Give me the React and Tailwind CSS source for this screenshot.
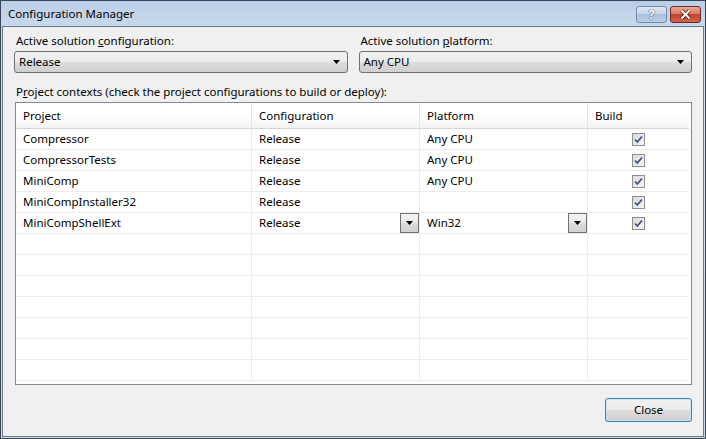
import React from "react"

const rows = [
    { project: "Compressor", config: "Release", platform: "Any CPU" },
    { project: "CompressorTests", config: "Release", platform: "Any CPU" },
    { project: "MiniComp", config: "Release", platform: "Any CPU" },
    { project: "MiniCompInstaller32", config: "Release", platform: "" },
    { project: "MiniCompShellExt", config: "Release", platform: "Win32", combo: true },
]

function Arrow() {
    return <svg width="7" height="4" viewBox="0 0 7 4"><path d="M0 0h7L3.5 4z" fill="#000" /></svg>
}

function Combo({ value }) {
    return <div className="flex h-[22px] items-center justify-between rounded-[3px] border border-[#707070] bg-[linear-gradient(#f2f2f2_0%,#ebebeb_50%,#dddddd_50%,#cfcfcf_100%)] pl-[4px] pr-[7px]">
        <span>{value}</span>
        <Arrow />
    </div>
}

function CellButton() {
    return <div className="flex h-[20px] w-[19px] items-center justify-center border border-[#707070] bg-[linear-gradient(#f4f4f4_0%,#e8e8e8_50%,#dcdcdc_50%,#d2d2d2_100%)]">
        <Arrow />
    </div>
}

function Check() {
    return <div className="flex h-[13px] w-[13px] items-center justify-center border border-[#8e8f8f] bg-[linear-gradient(135deg,#dadada,#f6f6f6)]">
        <svg width="11" height="11" viewBox="0 0 11 11">
            <path d="M2 5.5L4.3 8L9 2.5" stroke="#3d4f85" strokeWidth="1.7" fill="none" />
        </svg>
    </div>
}

export default function App() {
    const empty = Array.from({ length: 7 })
    return <div className="h-[439px] w-[706px] overflow-hidden bg-[#f0f0f0] font-['Noto_Sans','Liberation_Sans',sans-serif] text-[11.5px] text-black">
        <div className="flex h-[439px] w-[706px] flex-col border border-[#3a4656] bg-[linear-gradient(#b9cee7,#d3e0ef_40px,#cddcec)]">
            {/* title bar */}
            <div className="flex h-[25px] items-center justify-between pl-[7px] pr-[4px]">
                <span className="text-[11.5px] text-[#000]">Configuration Manager</span>
                <div className="flex gap-[3px] pt-[1px]">
                    <div className="flex h-[17px] w-[31px] items-center justify-center rounded-[3px] border border-[#6f8aaa] bg-[linear-gradient(#dbe6f2_0%,#c3d4e8_50%,#a9c0dc_50%,#b9cde5_100%)]">
                        <span className="text-[13px] font-bold leading-none text-white [text-shadow:0_0_1px_#1f3552,0_0_1px_#1f3552]">?</span>
                    </div>
                    <div className="flex h-[17px] w-[31px] items-center justify-center rounded-[3px] border border-[#6e2a22] bg-[linear-gradient(#e9a99b_0%,#d9765f_50%,#c4412a_50%,#d5654c_100%)]">
                        <svg width="13" height="11" viewBox="0 0 13 11">
                            <path d="M2.5 1.5L10.5 9.5M10.5 1.5L2.5 9.5" stroke="#4a1a14" strokeWidth="3.6" />
                            <path d="M2.5 1.5L10.5 9.5M10.5 1.5L2.5 9.5" stroke="#fff" strokeWidth="2" />
                        </svg>
                    </div>
                </div>
            </div>

            {/* client area */}
            <div className="mx-[1px] mb-[1px] flex flex-1 flex-col border border-[#6b7889] bg-[#f0f0f0] px-[11px]">
                <div className="mt-[6px] grid grid-cols-2 gap-x-[11px]">
                    <div className="flex flex-col">
                        <span className="h-[18px] pl-[2px] leading-[16px]">Active solution <span className="underline">c</span>onfiguration:</span>
                        <Combo value="Release" />
                    </div>
                    <div className="flex flex-col">
                        <span className="h-[18px] pl-[2px] leading-[16px]">Active solution <span className="underline">p</span>latform:</span>
                        <Combo value="Any CPU" />
                    </div>
                </div>

                <span className="mt-[11px] h-[17px] pl-[2px] leading-[16px]">P<span className="underline">r</span>oject contexts (check the project configurations to build or deploy):</span>

                <div className="ml-[1px] mt-[1px] h-[283px] overflow-hidden border border-[#828790] bg-white">
                    <div className="w-[673px]">
                        <div className="grid h-[26px] grid-cols-[236px_168px_168px_101px] border-b border-[#d5d5d5] bg-[linear-gradient(#ffffff_0%,#ffffff_55%,#f3f3f3_100%)]">
                            {["Project", "Configuration", "Platform", "Build"].map((h, i) =>
                                <div key={h} className={`flex items-center pl-[7px] ${i < 3 ? "border-r border-[#e3e3e3]" : ""}`}>{h}</div>
                            )}
                        </div>
                        {rows.map(r =>
                            <div key={r.project} className="grid h-[21px] grid-cols-[236px_168px_168px_101px] border-b border-[#ececec]">
                                <div className="flex items-center border-r border-[#ececec] pl-[7px]">{r.project}</div>
                                <div className="flex items-center justify-between border-r border-[#ececec] pl-[7px]">
                                    <span>{r.config}</span>
                                    {r.combo && <CellButton />}
                                </div>
                                <div className="flex items-center justify-between border-r border-[#ececec] pl-[7px]">
                                    <span>{r.platform}</span>
                                    {r.combo && <CellButton />}
                                </div>
                                <div className="flex items-center justify-center">
                                    <Check />
                                </div>
                            </div>
                        )}
                        {empty.map((_, i) =>
                            <div key={i} className="grid h-[21px] grid-cols-[236px_168px_168px_101px] border-b border-[#ececec]">
                                <div className="border-r border-[#ececec]"></div>
                                <div className="border-r border-[#ececec]"></div>
                                <div className="border-r border-[#ececec]"></div>
                                <div></div>
                            </div>
                        )}
                    </div>
                </div>

                <div className="mt-[13px] flex justify-end">
                    <button className="h-[24px] w-[87px] rounded-[3px] border border-[#3c7fb1] bg-[linear-gradient(#f2f2f2_0%,#ebebeb_50%,#dddddd_50%,#cfcfcf_100%)] shadow-[inset_0_0_0_1px_#c6e6f8]">
                        Close
                    </button>
                </div>
            </div>
        </div>
    </div>
}
